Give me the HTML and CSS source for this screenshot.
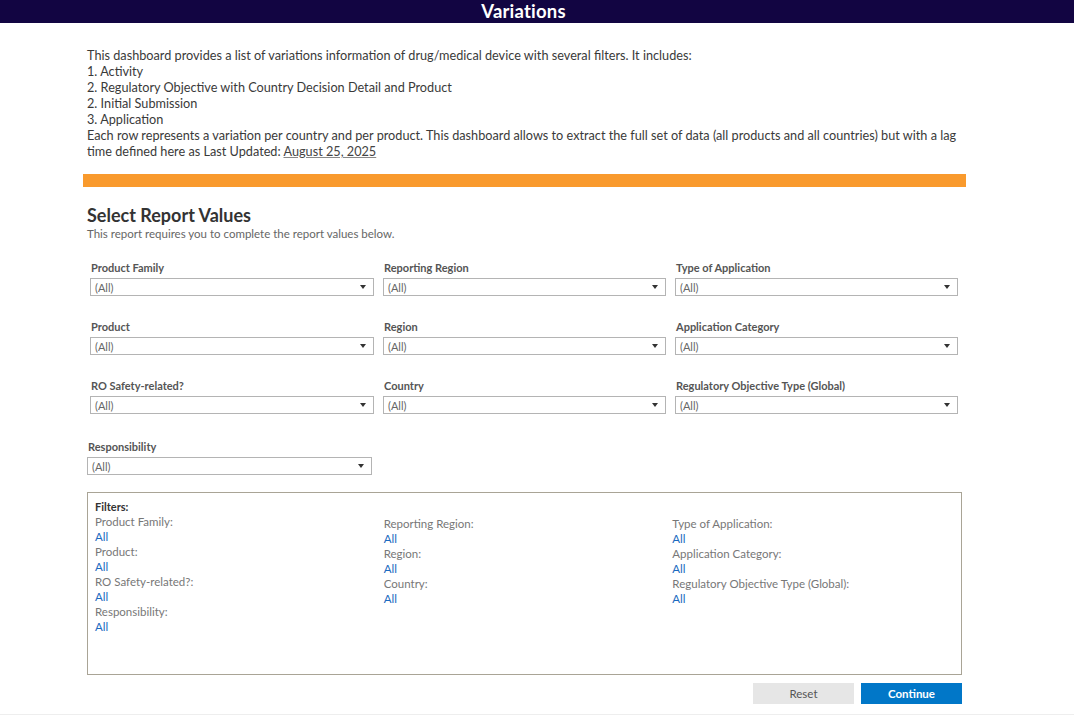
FILE: index.html
```html
<!DOCTYPE html>
<html>
<head>
<meta charset="utf-8">
<link rel="stylesheet" href="styles.css">
</head>
<body>
<header class="topbar">Variations</header>
<main class="page">
  <div class="intro">
    <div>This dashboard provides a list of variations information of drug/medical device with several filters. It includes:</div>
    <div>1. Activity</div>
    <div>2. Regulatory Objective with Country Decision Detail and Product</div>
    <div>2. Initial Submission</div>
    <div>3. Application</div>
    <div>Each row represents a variation per country and per product. This dashboard allows to extract the full set of data (all products and all countries) but with a lag</div>
    <div>time defined here as Last Updated: <span class="date">August 25, 2025</span></div>
  </div>
  <div class="orange"></div>
  <section class="report">
    <h1 class="title">Select Report Values</h1>
    <p class="subtitle">This report requires you to complete the report values below.</p>
    <div class="grid">
      <div class="field"><div class="label">Product Family</div><div class="select"><span>(All)</span><i class="caret"></i></div></div>
      <div class="field"><div class="label">Reporting Region</div><div class="select"><span>(All)</span><i class="caret"></i></div></div>
      <div class="field"><div class="label">Type of Application</div><div class="select"><span>(All)</span><i class="caret"></i></div></div>
      <div class="field"><div class="label">Product</div><div class="select"><span>(All)</span><i class="caret"></i></div></div>
      <div class="field"><div class="label">Region</div><div class="select"><span>(All)</span><i class="caret"></i></div></div>
      <div class="field"><div class="label">Application Category</div><div class="select"><span>(All)</span><i class="caret"></i></div></div>
      <div class="field"><div class="label">RO Safety-related?</div><div class="select"><span>(All)</span><i class="caret"></i></div></div>
      <div class="field"><div class="label">Country</div><div class="select"><span>(All)</span><i class="caret"></i></div></div>
      <div class="field"><div class="label">Regulatory Objective Type (Global)</div><div class="select"><span>(All)</span><i class="caret"></i></div></div>
    </div>
    <div class="field single"><div class="label">Responsibility</div><div class="select"><span>(All)</span><i class="caret"></i></div></div>
    <div class="filters">
      <div class="filters-title">Filters:</div>
      <div class="filter-cols">
        <div class="fcol">
          <div class="fname">Product Family:</div><div class="fval">All</div>
          <div class="fname">Product:</div><div class="fval">All</div>
          <div class="fname">RO Safety-related?:</div><div class="fval">All</div>
          <div class="fname">Responsibility:</div><div class="fval">All</div>
        </div>
        <div class="fcol shifted">
          <div class="fname">Reporting Region:</div><div class="fval">All</div>
          <div class="fname">Region:</div><div class="fval">All</div>
          <div class="fname">Country:</div><div class="fval">All</div>
        </div>
        <div class="fcol shifted">
          <div class="fname">Type of Application:</div><div class="fval">All</div>
          <div class="fname">Application Category:</div><div class="fval">All</div>
          <div class="fname">Regulatory Objective Type (Global):</div><div class="fval">All</div>
        </div>
      </div>
    </div>
    <div class="actions">
      <button class="btn reset">Reset</button>
      <button class="btn continue">Continue</button>
    </div>
  </section>
</main>
<div class="footline"></div>
</body>
</html>
```

FILE: styles.css
```css
html, body {
  margin: 0;
  padding: 0;
  background: #ffffff;
  font-family: Lato, "Open Sans", sans-serif;
  color: #333333;
}
body {
  width: 1074px;
  height: 716px;
  overflow: hidden;
  position: relative;
}
.topbar {
  height: 23px;
  background: #120542;
  color: #ffffff;
  font-weight: 700;
  font-size: 18.5px;
  line-height: 23px;
  text-align: center;
  letter-spacing: 0.2px;
  padding-right: 27px;
}
.page {
  margin-left: 83px;
  width: 883px;
}
.intro {
  margin-top: 24px;
  padding-left: 4px;
  font-size: 12.7px;
  line-height: 16px;
  color: #3a3a3a;
}
.date {
  text-decoration: underline;
  text-decoration-color: #888888;
  color: #444444;
}
.orange {
  margin-top: 15px;
  height: 13px;
  background: #f99a2d;
}
.report {
  padding-left: 4px;
}
.title {
  margin: 18px 0 0 0;
  font-size: 18px;
  line-height: 20px;
  font-weight: 700;
  color: #333333;
}
.subtitle {
  margin: 2px 0 0 0;
  font-size: 11.5px;
  line-height: 14px;
  color: #666666;
}
.grid {
  margin-top: 20px;
  margin-left: 3px;
  display: grid;
  grid-template-columns: 284px 283px 283px;
  column-gap: 9px;
  row-gap: 24px;
}
.field {
  display: flex;
  flex-direction: column;
}
.label {
  font-size: 11px;
  line-height: 14px;
  font-weight: 700;
  color: #555555;
  margin-bottom: 3px;
  padding-left: 1px;
}
.select {
  box-sizing: border-box;
  height: 18px;
  border: 1px solid #b4b4b4;
  display: flex;
  align-items: center;
  justify-content: space-between;
  padding: 0 7px 0 4px;
  font-size: 11px;
  color: #666666;
}
.caret {
  width: 0;
  height: 0;
  border-left: 3px solid transparent;
  border-right: 3px solid transparent;
  border-top: 4px solid #333333;
}
.single {
  width: 285px;
  margin-top: 26px;
}
.filters {
  box-sizing: border-box;
  margin-top: 17px;
  width: 875px;
  height: 183px;
  border: 1px solid #a9a496;
  padding: 6px 0 0 7px;
}
.filters-title {
  font-size: 11px;
  line-height: 15px;
  font-weight: 700;
  color: #333333;
}
.filter-cols {
  display: flex;
}
.fcol {
  width: 289px;
  font-size: 11.5px;
  line-height: 15px;
}
.fcol.shifted {
  padding-top: 2px;
}
.fname {
  color: #777777;
}
.fval {
  color: #1b6ac0;
}
.actions {
  margin-top: 8px;
  width: 875px;
  display: flex;
  justify-content: flex-end;
  gap: 7px;
}
.btn {
  width: 101px;
  height: 21px;
  border: none;
  font-family: Lato, "Open Sans", sans-serif;
  font-size: 11.5px;
  padding: 0;
}
.reset {
  background: #e6e6e6;
  color: #555555;
}
.continue {
  background: #0177c8;
  color: #ffffff;
  font-weight: 700;
}
.footline {
  position: absolute;
  left: 0;
  right: 0;
  top: 714px;
  height: 1px;
  background: #eeeeee;
}
```
